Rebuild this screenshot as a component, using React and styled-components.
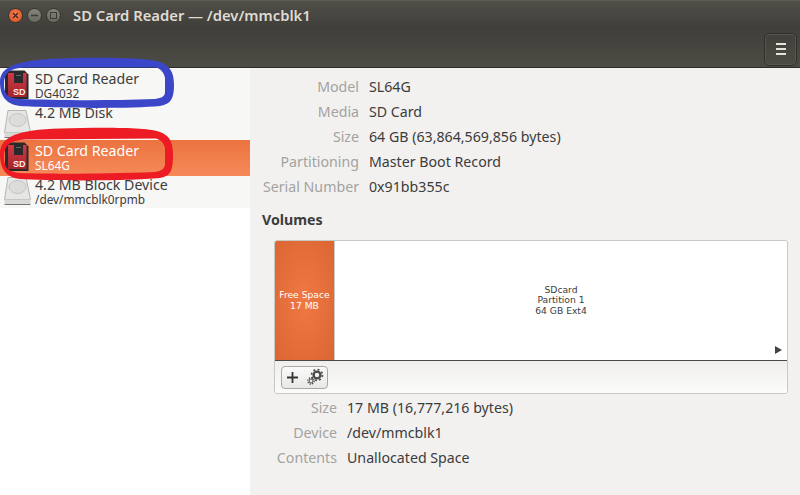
import React from 'react'
import styled, { createGlobalStyle } from 'styled-components'

const Global = createGlobalStyle`
  html, body { margin: 0; padding: 0; background: #f2f1f0; }
  body { font-family: "Noto Sans", "Open Sans", sans-serif; }
`

const Win = styled.div`
  position: relative;
  width: 800px;
  height: 495px;
  overflow: hidden;
  display: flex;
  flex-direction: column;
  background: #f2f1f0;
`

const TitleBar = styled.div`
  height: 29px;
  flex-shrink: 0;
  display: flex;
  align-items: center;
  padding-left: 8px;
  background: linear-gradient(#504e47, #3f3e39);
  border-top: 1px solid #5f5d53;
  box-sizing: border-box;
`

const WinBtn = styled.div`
  width: 15px;
  height: 15px;
  margin-right: 4px;
  border-radius: 50%;
  border: 1px solid #37362f;
  box-sizing: border-box;
  display: flex;
  align-items: center;
  justify-content: center;
  background: ${p => p.$close ? 'radial-gradient(circle at 50% 40%, #f48055, #dd4a1d)' : 'linear-gradient(#85847c, #6a6961)'};
  color: ${p => p.$close ? '#3c2a20' : '#3b3a34'};
`

const Title = styled.div`
  margin-left: 8px;
  color: #dfdbd2;
  font-size: 14.8px;
  font-weight: 600;
  white-space: nowrap;
`

const ToolBar = styled.div`
  height: 38px;
  flex-shrink: 0;
  display: flex;
  align-items: center;
  justify-content: flex-end;
  padding-right: 3px;
  background: linear-gradient(#403f3a, #4c4b44);
  border-bottom: 1px solid #2e2d29;
  box-sizing: content-box;
`

const MenuBtn = styled.div`
  width: 33px;
  height: 33px;
  margin-top: 2px;
  box-sizing: border-box;
  border: 1px solid #302f2b;
  border-radius: 5px;
  display: flex;
  flex-direction: column;
  align-items: center;
  justify-content: center;
  gap: 3px;
  box-shadow: inset 0 0 0 1px #57564e;
  span { width: 10px; height: 2px; background: #e6e3dc; display: block; }
`

const Body = styled.div`
  flex: 1;
  display: flex;
  min-height: 0;
`

const Side = styled.div`
  width: 250px;
  background: #fff;
  flex-shrink: 0;
`

const Row = styled.div`
  height: ${p => p.$h}px;
  display: flex;
  padding-left: 2px;
  box-sizing: border-box;
  background: ${p => p.$sel ? 'linear-gradient(#eb7340, #f58a58)' : '#f7f7f6'};
  color: ${p => p.$sel ? '#fff' : '#3c3c3c'};
`

const RowIcon = styled.div`
  width: 32px;
  height: 32px;
  margin-top: ${p => p.$mt}px;
  flex-shrink: 0;
`

const RowText = styled.div`
  margin-left: 1px;
  padding-top: ${p => p.$pt}px;
  white-space: nowrap;
`

const Name = styled.div`
  font-size: 14.2px;
  line-height: 15px;
`

const Sub = styled.div`
  font-size: 11.8px;
  line-height: 15px;
`

const Main = styled.div`
  flex: 1;
  padding: 6px 12px 0;
`

const Info = styled.div`
  display: grid;
  grid-template-columns: ${p => p.$label}px auto;
  column-gap: 10px;
  justify-content: start;
  grid-auto-rows: 25px;
  align-items: center;
  font-size: 14.2px;
`

const Label = styled.div`
  text-align: right;
  color: #a3a39f;
  white-space: nowrap;
`

const Value = styled.div`
  color: #3c3c3c;
  white-space: nowrap;
`

const Heading = styled.div`
  margin-top: 9px;
  height: 24px;
  line-height: 24px;
  font-size: 14.2px;
  font-weight: 700;
  color: #3c3c3c;
`

const VolBox = styled.div`
  margin: 8px 0 0 12px;
  width: 514px;
  height: 154px;
  box-sizing: border-box;
  border: 1px solid #c8c8c5;
  border-radius: 3px;
  overflow: hidden;
  display: flex;
  flex-direction: column;
`

const Graph = styled.div`
  position: relative;
  height: 119px;
  flex-shrink: 0;
  display: flex;
  background: #fff;
  border-bottom: 1px solid #4a4a48;
  font-family: "DejaVu Sans", sans-serif;
  font-size: 9.2px;
  line-height: 10.5px;
  text-align: center;
`

const Free = styled.div`
  width: 60px;
  box-sizing: border-box;
  background: radial-gradient(ellipse at center, #ef7844, #dc6632);
  color: #fff;
  border-right: 1px solid #c8c8c5;
  display: flex;
  align-items: center;
  justify-content: center;
`

const Part = styled.div`
  flex: 1;
  color: #3c3c3c;
  display: flex;
  align-items: center;
  justify-content: center;
`

const Arrow = styled.div`
  position: absolute;
  right: 5px;
  bottom: 6px;
  width: 0;
  height: 0;
  border-left: 7px solid #444;
  border-top: 4px solid transparent;
  border-bottom: 4px solid transparent;
`

const VolTools = styled.div`
  flex: 1;
  display: flex;
  align-items: center;
  padding-left: 6px;
  background: linear-gradient(#f0efee, #fbfbfa);
`

const ToolGroup = styled.div`
  width: 47px;
  height: 23px;
  box-sizing: border-box;
  border: 1px solid #a9a9a6;
  border-radius: 4px;
  background: linear-gradient(#fafafa, #e9e8e6);
  display: flex;
  align-items: center;
  justify-content: space-between;
  padding: 0 1px 0 5px;
`

const Lower = styled.div`
  margin-top: 1px;
`

const Note = styled.svg`
  position: absolute;
  left: 0;
  top: 0;
  pointer-events: none;
`

const SdIcon = () => (
  <svg width="32" height="32" viewBox="0 0 32 32">
    <defs>
      <linearGradient id="sdRed" x1="0" y1="0" x2="0" y2="1">
        <stop offset="0" stopColor="#cf3a44" />
        <stop offset="1" stopColor="#a4252c" />
      </linearGradient>
    </defs>
    <path d="M3 .5h19.500l4 4V29H3z" fill="#2a2a2d" />
    <path d="M6 3h6v10h9V3h3.500v24H6z" fill="url(#sdRed)" />
    <rect x="14" y="5" width="5" height="1" fill="#66666a" />
    <text x="11" y="25" fontFamily="Liberation Sans, sans-serif" fontSize="9" fontWeight="700" fill="#f6eaea">SD</text>
  </svg>
)

const DiskIcon = () => (
  <svg width="32" height="32" viewBox="0 0 32 32">
    <path d="M6 1.500h18l4.500 22H2.500z" fill="#e6e6e4" stroke="#b4b4b1" />
    <ellipse cx="15.500" cy="11" rx="8.500" ry="6.500" fill="#dcdcda" stroke="#c4c4c1" />
    <path d="M2.500 23.500h26V28h-26z" fill="#d9d9d6" />
    <path d="M2.500 28.500h26" stroke="#77777a" />
  </svg>
)

const Gears = () => (
  <svg width="22" height="21" viewBox="0 0 22 21">
    <g fill="none" stroke="#4a4a48">
      <circle cx="13" cy="8" r="3.400" strokeWidth="2.400" />
      <circle cx="13" cy="8" r="5.500" strokeWidth="1.600" strokeDasharray="2 2.300" />
      <circle cx="7" cy="14" r="2" strokeWidth="1" />
      <circle cx="7" cy="14" r="3.200" strokeWidth="1.200" strokeDasharray="1.300 1.200" />
    </g>
  </svg>
)

const devices = [
  { name: 'SD Card Reader', sub: 'DG4032', icon: 'sd', h: 36, pt: 3, mt: 2 },
  { name: '4.2 MB Disk', icon: 'disk', h: 36, pt: 1, mt: 5 },
  { name: 'SD Card Reader', sub: 'SL64G', icon: 'sd', h: 36, pt: 3, mt: 2, sel: true },
  { name: '4.2 MB Block Device', sub: '/dev/mmcblk0rpmb', icon: 'disk', h: 32, pt: 1, mt: 0 },
]

const driveInfo = [
  ['Model', 'SL64G'],
  ['Media', 'SD Card'],
  ['Size', '64 GB (63,864,569,856 bytes)'],
  ['Partitioning', 'Master Boot Record'],
  ['Serial Number', '0x91bb355c'],
]

const volInfo = [
  ['Size', '17 MB (16,777,216 bytes)'],
  ['Device', '/dev/mmcblk1'],
  ['Contents', 'Unallocated Space'],
]

export default function App() {
  return (
    <Win>
      <Global />
      <TitleBar>
        <WinBtn $close>
          <svg width="7" height="7" viewBox="0 0 7 7"><path d="M1 1l5 5M6 1L1 6" stroke="currentColor" strokeWidth="1.300" /></svg>
        </WinBtn>
        <WinBtn>
          <svg width="7" height="7" viewBox="0 0 7 7"><path d="M0 3.500h7" stroke="currentColor" strokeWidth="1.500" /></svg>
        </WinBtn>
        <WinBtn>
          <svg width="7" height="7" viewBox="0 0 7 7"><rect x=".5" y=".5" width="6" height="6" fill="none" stroke="currentColor" /></svg>
        </WinBtn>
        <Title>SD Card Reader — /dev/mmcblk1</Title>
      </TitleBar>
      <ToolBar>
        <MenuBtn><span /><span /><span /></MenuBtn>
      </ToolBar>
      <Body>
        <Side>
          {devices.map((d, i) => (
            <Row key={i} $h={d.h} $sel={d.sel}>
              <RowIcon $mt={d.mt}>{d.icon === 'sd' ? <SdIcon /> : <DiskIcon />}</RowIcon>
              <RowText $pt={d.pt}>
                <Name>{d.name}</Name>
                {d.sub && <Sub>{d.sub}</Sub>}
              </RowText>
            </Row>
          ))}
        </Side>
        <Main>
          <Info $label={97}>
            {driveInfo.map(([k, v]) => (
              <React.Fragment key={k}>
                <Label>{k}</Label>
                <Value>{v}</Value>
              </React.Fragment>
            ))}
          </Info>
          <Heading>Volumes</Heading>
          <VolBox>
            <Graph>
              <Free>Free Space<br />17 MB</Free>
              <Part>SDcard<br />Partition 1<br />64 GB Ext4</Part>
              <Arrow />
            </Graph>
            <VolTools>
              <ToolGroup>
                <svg width="11" height="11" viewBox="0 0 11 11"><path d="M5.500 0v11M0 5.500h11" stroke="#333" strokeWidth="1.800" /></svg>
                <Gears />
              </ToolGroup>
            </VolTools>
          </VolBox>
          <Lower>
            <Info $label={75}>
              {volInfo.map(([k, v]) => (
                <React.Fragment key={k}>
                  <Label>{k}</Label>
                  <Value>{v}</Value>
                </React.Fragment>
              ))}
            </Info>
          </Lower>
        </Main>
      </Body>
      <Note width="800" height="495">
        <path fillRule="evenodd" fill="#3b46c8" d="M0 82C0 66 18 60 60 58.500C100 57 150 58 160 62C170 66 174 72 174 85C174 100 170 104 160 106C130 109 50 108 20 106C5 104 0 95 0 82ZM4 84C4 73 10 68 25 67.500L155 67.500C160 68 164 72 165 78L165 92C165 96 162 98 155 99C100 101 50 100 20 99C8 98 4 95 4 84Z" />
        <path fillRule="evenodd" fill="#ed1c24" d="M0 154C0 136 18 130 60 128.500C100 127 150 127 160 132C170 136 173 142 173 155C173 172 170 176 160 178C130 181 50 181 20 179C5 177 0 168 0 154ZM4 156C4 146 10 140 25 139.500L155 138.500C160 139 164 143 165 148L165 164C165 168 162 171 155 172C100 174 50 174 20 173C8 172 4 168 4 156Z" />
      </Note>
    </Win>
  )
}
